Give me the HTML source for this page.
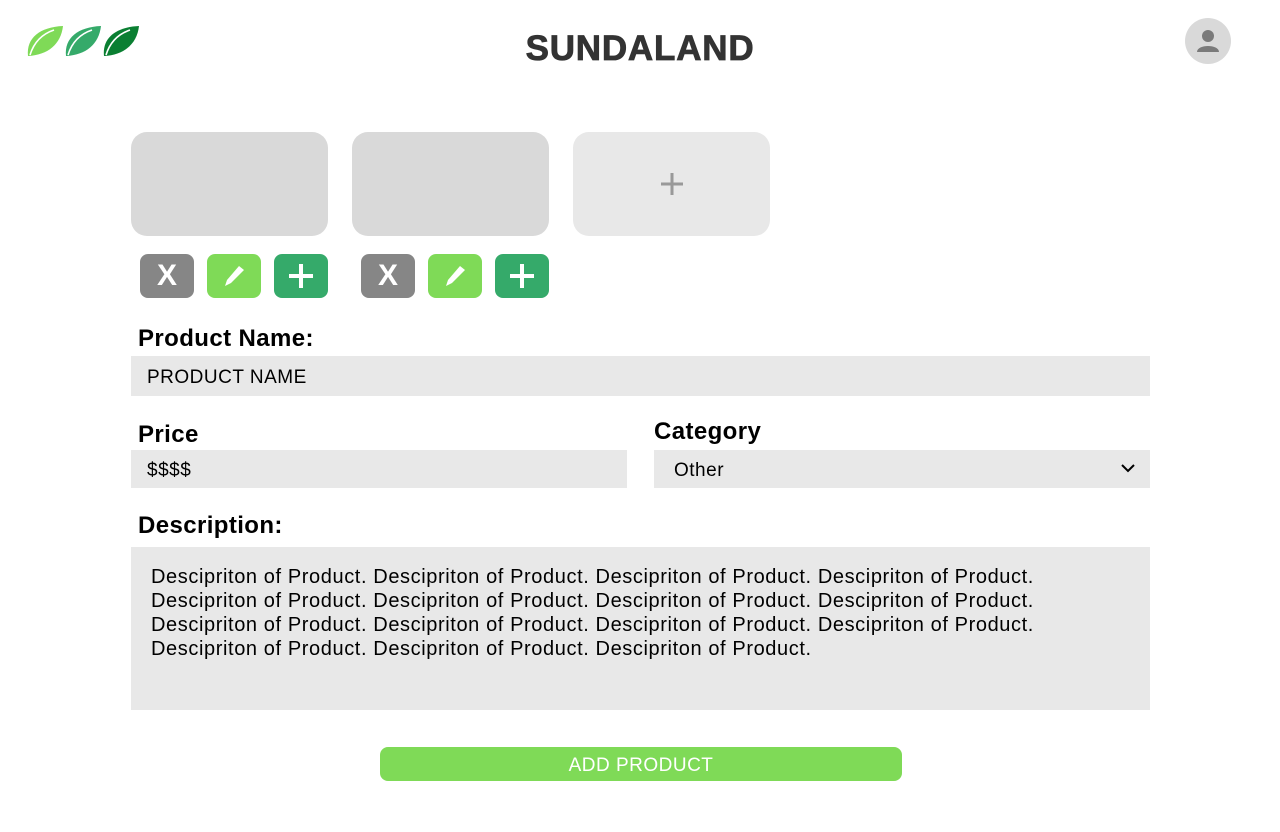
<!DOCTYPE html>
<html><head><meta charset="utf-8"><style>
*{margin:0;padding:0;box-sizing:border-box}
body{width:1280px;height:832px;background:#fff;font-family:"Liberation Sans",sans-serif;position:relative;overflow:hidden;color:#000}
.a{position:absolute}
.img{position:absolute;top:132px;width:197px;height:104px;border-radius:16px;background:#d9d9d9}
.btn{position:absolute;top:254px;width:54px;height:44px;border-radius:8px;display:flex;align-items:center;justify-content:center}
.g{background:#868686}.l{background:#7fda57}.d{background:#35aa6a}
.lab{position:absolute;font-weight:bold;font-size:24px;letter-spacing:0.4px}
.fld{position:absolute;background:#e8e8e8;font-size:19px;letter-spacing:0.5px;padding-left:16px;padding-top:4px;display:flex;align-items:center}
</style></head><body>
<svg class="a" style="left:26px;top:24px" width="118" height="34" viewBox="0 0 118 34">
<g><path d="M2 32 C0 14 14 3 37 2 C35 20 22 31 2 32Z" fill="#7fda57"/><path d="M4 31 C8 18 16 10 28 6" stroke="#fff" stroke-width="1.6" fill="none"/></g>
<g transform="translate(38 0)"><path d="M2 32 C0 14 14 3 37 2 C35 20 22 31 2 32Z" fill="#35aa6a"/><path d="M4 31 C8 18 16 10 28 6" stroke="#fff" stroke-width="1.6" fill="none"/></g>
<g transform="translate(76 0)"><path d="M2 32 C0 14 14 3 37 2 C35 20 22 31 2 32Z" fill="#0a7f32"/><path d="M4 31 C8 18 16 10 28 6" stroke="#fff" stroke-width="1.6" fill="none"/></g>
</svg>
<div class="a" style="left:0;width:1280px;top:29px;text-align:center;font-size:35px;font-weight:bold;color:#333;letter-spacing:0.8px;-webkit-text-stroke:0.8px #333">SUNDALAND</div>
<div class="a" style="left:1185px;top:18px;width:46px;height:46px;border-radius:50%;background:#d9d9d9;overflow:hidden">
<svg width="46" height="46" viewBox="0 0 46 46"><circle cx="23" cy="18" r="6" fill="#7a7a7a"/><path d="M12 34 C12 26 34 26 34 34Z" fill="#7a7a7a"/></svg></div>
<div class="img" style="left:131px"></div>
<div class="img" style="left:352px"></div>
<div class="img" style="left:573px;background:#e8e8e8;display:flex;align-items:center;justify-content:center"><svg width="26" height="26" viewBox="0 0 26 26"><path d="M13 2V24M2 13H24" stroke="#999" stroke-width="3"/></svg></div>
<div class="btn g" style="left:140px"><span style="color:#fff;font-weight:bold;font-size:30px">X</span></div>
<div class="btn l" style="left:207px"><svg width="24" height="24" viewBox="0 0 24 24"><path d="M17 2 L22 6 L9 19 L3 22 L5 16Z" fill="#fff"/></svg></div>
<div class="btn d" style="left:274px"><svg width="26" height="26" viewBox="0 0 26 26"><path d="M13 1V25M1 13H25" stroke="#fff" stroke-width="4"/></svg></div>
<div class="btn g" style="left:361px"><span style="color:#fff;font-weight:bold;font-size:30px">X</span></div>
<div class="btn l" style="left:428px"><svg width="24" height="24" viewBox="0 0 24 24"><path d="M17 2 L22 6 L9 19 L3 22 L5 16Z" fill="#fff"/></svg></div>
<div class="btn d" style="left:495px"><svg width="26" height="26" viewBox="0 0 26 26"><path d="M13 1V25M1 13H25" stroke="#fff" stroke-width="4"/></svg></div>
<div class="lab" style="left:138px;top:325px">Product Name:</div>
<div class="fld" style="left:131px;top:356px;width:1019px;height:40px">PRODUCT NAME</div>
<div class="lab" style="left:138px;top:421px">Price</div>
<div class="fld" style="left:131px;top:450px;width:496px;height:38px">$$$$</div>
<div class="lab" style="left:654px;top:418px">Category</div>
<div class="fld" style="left:654px;top:450px;width:496px;height:38px;padding-left:20px">Other
<svg class="a" style="right:14px;top:12px" width="16" height="12" viewBox="0 0 16 12"><path d="M2 3L8 9L14 3" stroke="#000" stroke-width="2" fill="none"/></svg></div>
<div class="lab" style="left:138px;top:512px">Description:</div>
<div class="a" style="left:131px;top:547px;width:1019px;height:163px;background:#e8e8e8;padding:18px 20px;font-size:20px;letter-spacing:0.6px;line-height:24px;white-space:nowrap">Descipriton of Product. Descipriton of Product. Descipriton of Product. Descipriton of Product.<br>Descipriton of Product. Descipriton of Product. Descipriton of Product. Descipriton of Product.<br>Descipriton of Product. Descipriton of Product. Descipriton of Product. Descipriton of Product.<br>Descipriton of Product. Descipriton of Product. Descipriton of Product.</div>
<div class="a" style="left:380px;top:747px;width:522px;height:34px;border-radius:8px;background:#7fda57;color:#fff;font-size:19px;letter-spacing:0.5px;padding-top:3px;display:flex;align-items:center;justify-content:center">ADD PRODUCT</div>
</body></html>
